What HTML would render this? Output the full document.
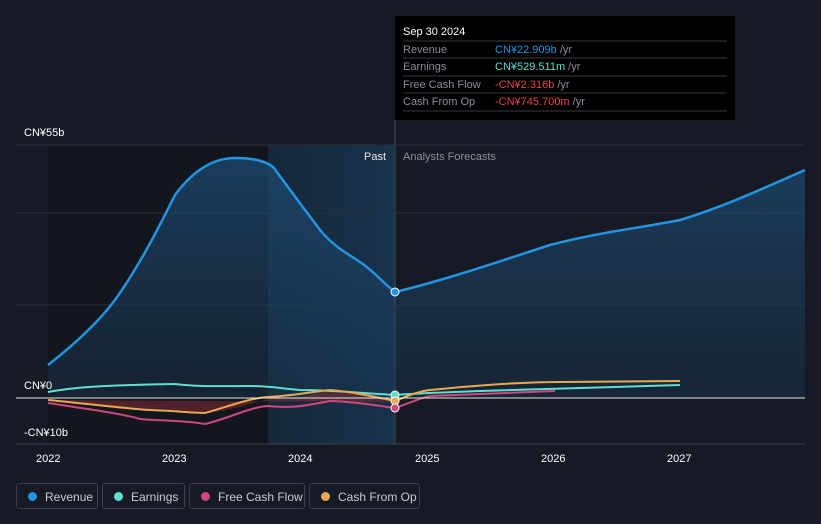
<!DOCTYPE html><html><head><style>body{margin:0;background:#151a24;width:821px;height:524px;overflow:hidden;font-family:"Liberation Sans",sans-serif}
.leg{position:absolute;top:483px;height:26px;border:1px solid #3a404b;border-radius:3px;color:#c9ccd2;font-size:12px;line-height:26px;box-sizing:border-box;padding-left:28px}
.leg i{position:absolute;left:11px;top:8px;width:9px;height:9px;border-radius:50%}
</style></head><body>
<svg width="821" height="524" style="position:absolute;left:0;top:0" font-family="Liberation Sans, sans-serif">
<defs><linearGradient id="hl" x1="0" x2="1"><stop offset="0" stop-color="#16283a"/><stop offset="1" stop-color="#17324c"/></linearGradient>
<linearGradient id="rf" x1="0" y1="0" x2="0" y2="1"><stop offset="0" stop-color="#1e4e78" stop-opacity=".7"/><stop offset="1" stop-color="#1a3550" stop-opacity=".4"/></linearGradient></defs>
<rect x="48" y="145" width="220" height="299" fill="#12161e"/>
<rect x="268" y="145" width="127" height="299" fill="url(#hl)"/>
<g stroke="#2a303a" stroke-width="1"><line x1="16" y1="145" x2="805" y2="145"/><line x1="16" y1="213" x2="805" y2="213"/><line x1="16" y1="305" x2="805" y2="305"/><line x1="16" y1="444" x2="805" y2="444" stroke="#3a404b"/></g>
<path d="M48,365 C80,340 100,320 115,300 C140,265 160,225 175,195 C195,168 215,158 235,158 C255,158 268,162 274,168 C290,190 305,210 320,230 C335,248 350,255 360,262 C375,272 385,285 395,292 C430,284 480,268 550,245 C600,232 640,228 680,220 C720,208 760,190 805,170 L805,398 L48,398Z" fill="url(#rf)"/>
<path d="M48,365 C80,340 100,320 115,300 C140,265 160,225 175,195 C195,168 215,158 235,158 C255,158 268,162 274,168 C290,190 305,210 320,230 C335,248 350,255 360,262 C375,272 385,285 395,292 C430,284 480,268 550,245 C600,232 640,228 680,220 C720,208 760,190 805,170" fill="none" stroke="#2394e2" stroke-width="2.5"/>
<path d="M48,400 L80,404 120,409 175,412 205,414 240,407 268,399 300,397 330,391 360,394 395,402 Z" fill="#7a2a30" opacity=".6"/>
<path d="M48,392 C80,386 120,385 175,384 C200,387 220,386 250,386 C270,386 285,389 300,390 C330,390 360,393 395,395 C420,393 430,393 480,391 L680,385" fill="none" stroke="#5de0d0" stroke-width="2"/>
<path d="M48,403 C80,408 120,413 140,419 C160,421 180,420 205,424 C230,418 250,407 268,406 C290,408 300,407 330,401 C355,402 375,405 395,408 C410,403 420,398 430,396 L555,391" fill="none" stroke="#d1467f" stroke-width="2"/>
<path d="M48,400 C80,403 120,408 150,410 C180,411 190,413 205,413 C230,406 250,398 268,397 C290,396 310,392 330,390 C355,392 375,397 395,401 C410,395 420,391 430,390 C470,386 520,382 560,382 L680,381" fill="none" stroke="#e8a850" stroke-width="2"/>
<line x1="16" y1="398" x2="805" y2="398" stroke="#e6e6e6" stroke-width="1"/>
<line x1="395" y1="120" x2="395" y2="444" stroke="#3a4655"/>
<circle cx="395" cy="292" r="4" fill="#2394e2" stroke="#fff" stroke-width="1"/>
<circle cx="395" cy="395" r="4" fill="#5de0d0" stroke="#fff" stroke-width="1"/>
<circle cx="395" cy="401" r="4" fill="#e8a850" stroke="#fff" stroke-width="1"/>
<circle cx="395" cy="408" r="4" fill="#d1467f" stroke="#fff" stroke-width="1"/>
<g fill="#fff" font-size="11"><text x="24" y="136">CN¥55b</text><text x="24" y="389">CN¥0</text><text x="24" y="436">-CN¥10b</text>
<text x="36" y="462">2022</text><text x="162" y="462">2023</text><text x="288" y="462">2024</text><text x="415" y="462">2025</text><text x="541" y="462">2026</text><text x="667" y="462">2027</text>
<text x="364" y="160" fill="#e6e6e6">Past</text><text x="403" y="160" fill="#8a9099">Analysts Forecasts</text></g>
<rect x="395" y="16" width="340" height="104" fill="#000"/>
<g font-size="11"><text x="403" y="35" fill="#fff">Sep 30 2024</text>
<g stroke="#3a3a3a"><line x1="403" y1="41" x2="727" y2="41"/><line x1="403" y1="58" x2="727" y2="58"/><line x1="403" y1="76" x2="727" y2="76"/><line x1="403" y1="93" x2="727" y2="93"/><line x1="403" y1="111" x2="727" y2="111"/></g>
<g fill="#8a9099"><text x="403" y="53">Revenue</text><text x="403" y="70">Earnings</text><text x="403" y="88">Free Cash Flow</text><text x="403" y="105">Cash From Op</text></g>
<text x="495" y="53" fill="#2394e2">CN¥22.909b <tspan fill="#8a9099">/yr</tspan></text>
<text x="495" y="70" fill="#5de0d0">CN¥529.511m <tspan fill="#8a9099">/yr</tspan></text>
<text x="495" y="88" fill="#e64545">-CN¥2.316b <tspan fill="#8a9099">/yr</tspan></text>
<text x="495" y="105" fill="#e64545">-CN¥745.700m <tspan fill="#8a9099">/yr</tspan></text></g>
</svg>
<div class="leg" style="left:16px;width:82px"><i style="background:#2394e2"></i>Revenue</div>
<div class="leg" style="left:102px;width:83px"><i style="background:#5de0d0"></i>Earnings</div>
<div class="leg" style="left:189px;width:116px"><i style="background:#d1467f"></i>Free Cash Flow</div>
<div class="leg" style="left:309px;width:111px"><i style="background:#e8a850"></i>Cash From Op</div>
</body></html>
